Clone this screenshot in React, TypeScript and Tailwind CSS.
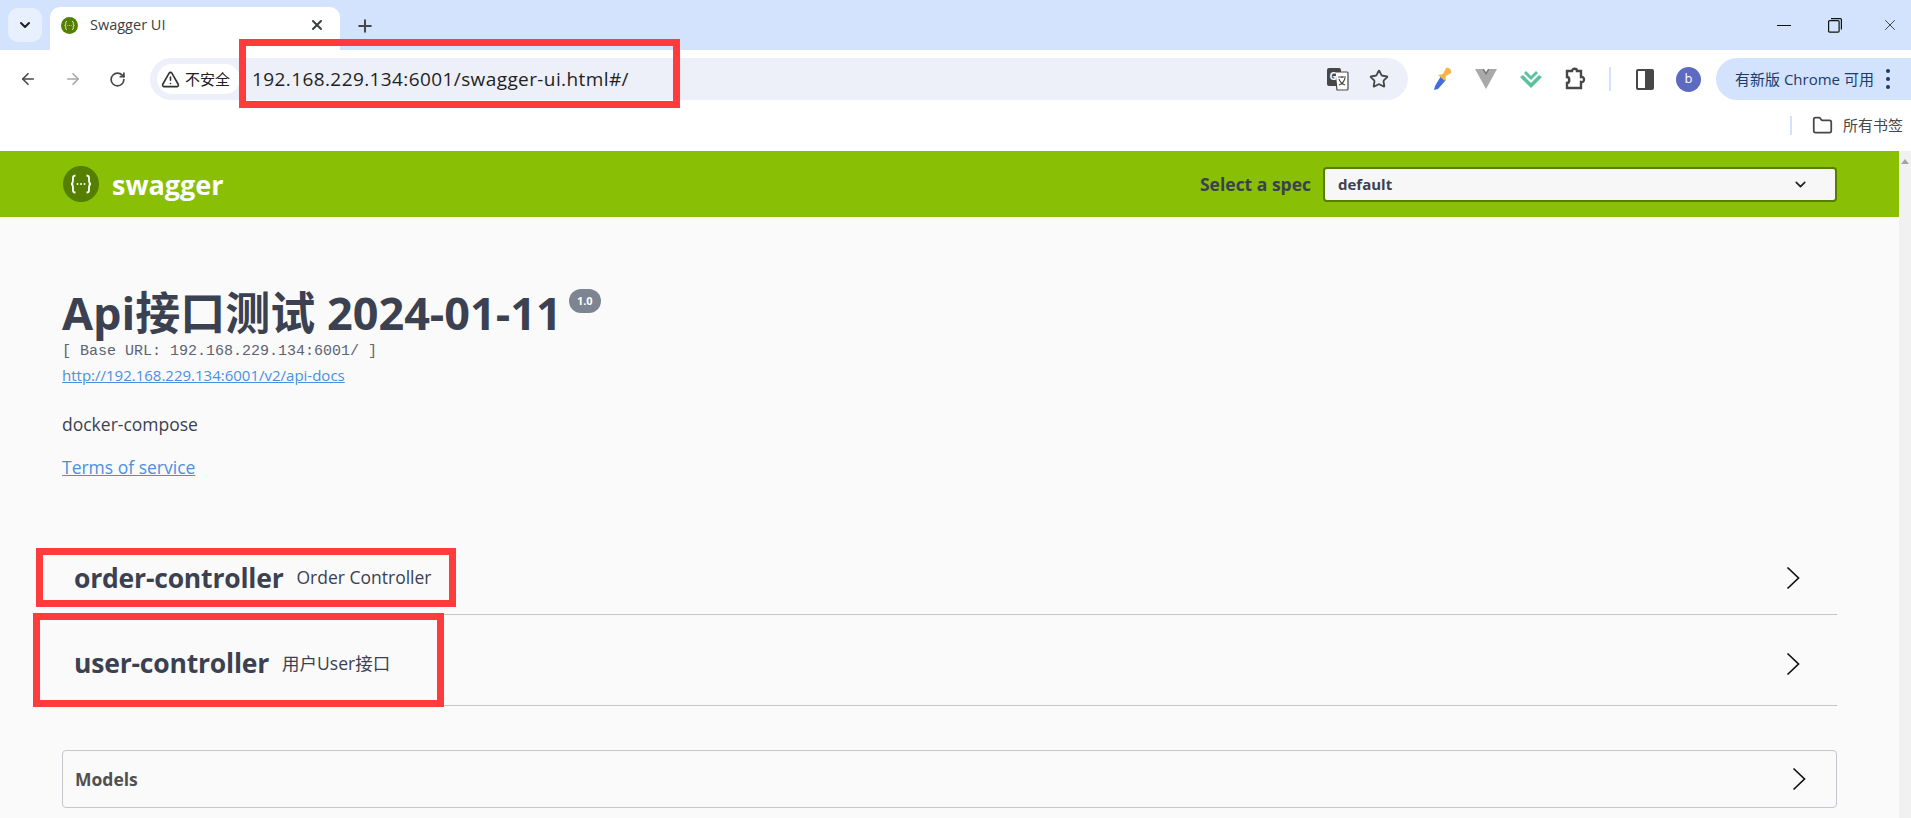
import { ArrowLeft, ArrowRight, ChevronDown, Folder, Plus, RotateCw, Star, TriangleAlert, X } from "lucide-react";

const CJK = "font-['Open_Sans','Noto_Sans_CJK_SC',sans-serif]";

function BraceLogo({ size }: { size: number }) {
    return (
        <svg width={size} height={size} viewBox="0 0 36 36">
            <circle cx="18" cy="18" r="18" fill="#547f00" />
            <path
                d="M12.5 9.5c-3 0-2.5 2-2.5 4.5s-.5 4-2 4c1.500 0 2 1.500 2 4s-.5 4.500 2.500 4.500M23.500 9.500c3 0 2.500 2 2.500 4.500s.5 4 2 4c-1.500 0-2 1.500-2 4s.5 4.500-2.500 4.500"
                fill="none"
                stroke="#fff"
                strokeWidth="1.800"
            />
            <circle cx="14.500" cy="18" r="1" fill="#fff" />
            <circle cx="18" cy="18" r="1" fill="#fff" />
            <circle cx="21.500" cy="18" r="1" fill="#fff" />
        </svg>
    );
}

function Chevron() {
    return (
        <svg width="14" height="24" viewBox="0 0 14 24" fill="none" stroke="#111" strokeWidth="1.700">
            <path d="M1.500 1.500 12.500 12 1.500 22.500" />
        </svg>
    );
}

function TagRow({ name, desc, height }: { name: string; desc: string; height: string }) {
    return (
        <div className={`flex items-center border-b border-[#c4c6cb] pl-[12px] pr-[37px] ${height}`}>
            <span className="text-[26.500px] font-bold leading-none tracking-[-0.2px] text-[#3b4151]">{name}</span>
            <span className="ml-[13px] text-[17.500px] leading-none text-[#3b4151]">{desc}</span>
            <span className="ml-auto flex">
                <Chevron />
            </span>
        </div>
    );
}

export default function App() {
    return (
        <div className={`relative flex h-[818px] w-[1911px] flex-col overflow-hidden bg-white ${CJK}`}>
            {/* tab strip */}
            <div className="flex h-[50px] shrink-0 items-end bg-[#d3e3fd] pl-[8px]">
                <div className="mb-[8px] flex h-[34px] w-[34px] items-center justify-center rounded-[10px] bg-[#e9f0fd]">
                    <ChevronDown size={16} strokeWidth={3} color="#1f1f1f" />
                </div>
                <div className="ml-[8px] flex h-[43px] w-[290px] items-center rounded-t-[10px] bg-white pb-[7px] pl-[11px] pr-[15px]">
                    <BraceLogo size={17} />
                    <span className="ml-[12px] text-[14.500px] text-[#3c4043]">Swagger UI</span>
                    <X className="ml-auto" size={16} strokeWidth={3} color="#3c4043" />
                </div>
                <Plus className="mb-[14px] ml-[15px]" size={20} strokeWidth={2.400} color="#474747" />
                <div className="mb-[16px] ml-auto flex w-[134px] items-center justify-between pr-[12px]">
                    <span className="h-px w-[14px] bg-[#111]" />
                    <svg width="14" height="15" viewBox="0 0 14 15" fill="none" stroke="#111" strokeWidth="1.200" className="ml-[27px]">
                        <rect x="0.600" y="2.600" width="10.500" height="11.500" rx="1" />
                        <path d="M3 .6h9.400a1 1 0 0 1 1 1v10" />
                    </svg>
                    <X className="ml-[29px]" size={18} strokeWidth={1} color="#111" />
                </div>
            </div>

            {/* toolbar */}
            <div className="flex h-[50px] shrink-0 items-center rounded-tl-[10px] bg-white pt-[8px]">
                <ArrowLeft className="ml-[19px]" size={18} strokeWidth={2.200} color="#474747" />
                <ArrowRight className="ml-[27px]" size={18} strokeWidth={2.200} color="#a8a8a8" />
                <RotateCw className="ml-[27px]" size={17} strokeWidth={2.400} color="#474747" />
                <div className="ml-[24px] flex h-[42px] w-[1258px] items-center rounded-full bg-[#edf0f8] pl-[7px] pr-[19px]">
                    <div className="flex h-[30px] w-[83px] shrink-0 items-center rounded-full bg-white pl-[4px]">
                        <TriangleAlert size={19} strokeWidth={2} color="#303030" />
                        <span className="ml-[5px] text-[15px] leading-none text-[#202124]">不安全</span>
                    </div>
                    <span className="ml-[12px] text-[19px] leading-none tracking-[0.4px] text-[#1f1f1f]">192.168.229.134:6001/swagger-ui.html#/</span>
                    <svg className="ml-auto" width="22" height="24" viewBox="0 0 22 24">
                        <rect x="0" y="1" width="14" height="18" rx="2" fill="#474747" />
                        <path d="M8 5h12a1 1 0 0 1 1 1v16a1 1 0 0 1-1 1H10z" fill="#fff" stroke="#474747" strokeWidth="1.200" />
                        <path d="M11 10h8M15 9v2M18 11c-1 4-3 6-6 7M12 12c1 3 3 5 6 6" stroke="#474747" strokeWidth="1.100" fill="none" />
                        <text x="2.500" y="13" fontSize="10" fontWeight="700" fill="#fff">G</text>
                    </svg>
                    <Star className="ml-[20px]" size={20} strokeWidth={2.200} color="#474747" />
                </div>
                <svg className="ml-[25px]" width="20" height="24" viewBox="0 0 20 24">
                    <path d="M8 9 2 19l-1 4 4-1 8-9z" fill="#3d6fe0" />
                    <path d="M5 8l5-1 3-6c3-1 6 2 5 5l-5 3-1 5z" fill="#f8b544" />
                </svg>
                <svg className="ml-[22px]" width="22" height="20" viewBox="0 0 22 20">
                    <path d="M0 0h7l4 7 4-7h7L11 20z" fill="#a9a9a9" />
                    <path d="M7 0l4 7 4-7h-2l-2 3-2-3z" fill="#7c7c7c" />
                </svg>
                <svg className="ml-[23px]" width="22" height="20" viewBox="0 0 22 20">
                    <path d="M0 8l11 11L22 8l-3-2-8 8-8-8z" fill="#5ac29b" />
                    <path d="M4 4l7 7 7-7-2-2-5 5-5-5z" fill="#5ac29b" />
                </svg>
                <svg className="ml-[23px]" width="22" height="24" viewBox="0 0 22 24" fill="none" stroke="#474747" strokeWidth="2.400">
                    <path d="M2 4h5c0-3 5-3 5 0h4v6c4-1 4 6 0 5v6H2v-5c3 0 3-6 0-6z" />
                </svg>
                <span className="ml-[22px] h-[24px] w-[2px] bg-[#d3e3fd]" />
                <div className="ml-[25px] flex h-[21px] w-[18px] rounded-[2px] border-2 border-[#474747]">
                    <span className="w-1/2" />
                    <span className="w-1/2 bg-[#474747]" />
                </div>
                <div className="ml-[22px] flex h-[25px] w-[25px] items-center justify-center rounded-full bg-[#5c6bc0] text-[13px] text-white">b</div>
                <div className="ml-[15px] flex h-[42px] flex-1 items-center rounded-l-full bg-[#d3e3fd] pl-[19px]">
                    <span className="whitespace-nowrap text-[15px] text-[#1c3a6b]">有新版 Chrome 可用</span>
                    <span className="ml-[12px] flex flex-col gap-[4px]">
                        <span className="h-[4px] w-[4px] rounded-full bg-[#1c3a6b]" />
                        <span className="h-[4px] w-[4px] rounded-full bg-[#1c3a6b]" />
                        <span className="h-[4px] w-[4px] rounded-full bg-[#1c3a6b]" />
                    </span>
                </div>
            </div>

            {/* bookmarks bar */}
            <div className="flex h-[51px] shrink-0 items-center justify-end pr-[8px]">
                <span className="h-[19px] w-[2px] bg-[#d3e3fd]" />
                <Folder className="ml-[20px]" size={21} strokeWidth={2} color="#474747" />
                <span className="ml-[10px] text-[15px] text-[#474747]">所有书签</span>
            </div>

            {/* page */}
            <div className="flex min-h-0 flex-1">
                <div className="flex min-w-0 flex-1 flex-col bg-[#fafafa]">
                    <div className="flex h-[66px] shrink-0 items-center bg-[#89bf04] pl-[63px] pr-[62px]">
                        <BraceLogo size={36} />
                        <span className="ml-[13px] text-[27px] font-bold leading-none text-white">swagger</span>
                        <span className="ml-auto text-[17.500px] font-bold text-[#3b4151]">Select a spec</span>
                        <div className="ml-[12px] flex h-[35px] w-[514px] items-center rounded-[4px] border-2 border-[#547f00] bg-[#f7f7f7] pl-[13px] pr-[26px]">
                            <span className="text-[15px] font-bold text-[#3b4151]">default</span>
                            <ChevronDown className="ml-auto" size={17} strokeWidth={2.400} color="#222" />
                        </div>
                    </div>

                    <div className="flex flex-col pl-[62px] pr-[62px]">
                        <div className="mt-[68px] flex items-start">
                            <h1 className="text-[45px] font-bold leading-[56px] text-[#3b4151]">Api接口测试 2024-01-11</h1>
                            <span className="ml-[7px] mt-[4px] flex h-[24px] w-[32px] items-center justify-center rounded-full bg-[#7d8492] text-[11px] font-bold text-white">1.0</span>
                        </div>
                        <div className="mt-[3px] font-['Liberation_Mono',monospace] text-[15px] leading-[16px] text-[#5d6373]">[ Base URL: 192.168.229.134:6001/ ]</div>
                        <a className="mt-[5px] self-start text-[15px] leading-[20px] text-[#4990e2] underline">http://192.168.229.134:6001/v2/api-docs</a>
                        <p className="mt-[27px] text-[17.500px] leading-[24px] text-[#3b4151]">docker-compose</p>
                        <a className="mt-[19px] self-start text-[17.500px] leading-[24px] text-[#4990e2] underline">Terms of service</a>

                        <div className="mt-[51px]">
                            <TagRow name="order-controller" desc="Order Controller" height="h-[85px] pt-[12px]" />
                            <TagRow name="user-controller" desc="用户User接口" height="h-[91px] pt-[7px]" />
                        </div>

                        <div className="mt-[44px] flex h-[58px] items-center rounded-[4px] border border-[#c4c6cb] pl-[12px] pr-[30px]">
                            <span className="text-[17.500px] font-bold text-[#505050]">Models</span>
                            <span className="ml-auto flex">
                                <Chevron />
                            </span>
                        </div>
                    </div>
                </div>
                <div className="flex w-[12px] shrink-0 justify-center bg-[#f1f1f1] pt-[8px]">
                    <span className="h-0 w-0 border-x-[4px] border-b-[5px] border-x-transparent border-b-[#a3a3a3]" />
                </div>
            </div>

            {/* red annotation boxes drawn over the screenshot */}
            <div className="absolute left-[239px] top-[39px] h-[69px] w-[441px] border-[7px] border-[#ff3b3b]" />
            <div className="absolute left-[36px] top-[548px] h-[59px] w-[420px] border-[7px] border-[#ff3b3b]" />
            <div className="absolute left-[33px] top-[613px] h-[94px] w-[411px] border-[7px] border-[#ff3b3b]" />
        </div>
    );
}
